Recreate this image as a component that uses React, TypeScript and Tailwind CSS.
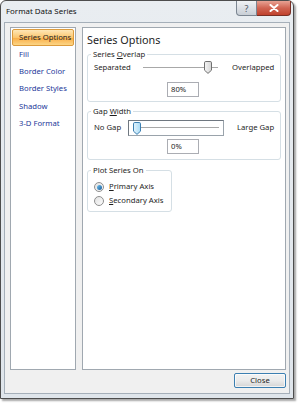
import React from "react";

const listItems = ["Fill", "Border Color", "Border Styles", "Shadow", "3-D Format"];

function Thumb({ active }: { active?: boolean }) {
  return (
    <svg width="8" height="13" viewBox="0 0 8 13" className="block">
      <defs>
        <linearGradient id={active ? "thA" : "thN"} x1="0" y1="0" x2="1" y2="0">
          <stop offset="0" stopColor={active ? "#e4f4fc" : "#f6f6f6"} />
          <stop offset="1" stopColor={active ? "#a9dbf6" : "#d4d4d4"} />
        </linearGradient>
      </defs>
      <path
        d="M1.8 0.5 H6.2 Q7.5 0.5 7.5 1.8 V9.2 L4 12.4 L0.5 9.2 V1.8 Q0.5 0.5 1.8 0.5 Z"
        fill={`url(#${active ? "thA" : "thN"})`}
        stroke={active ? "#3c7fb1" : "#707070"}
        strokeWidth="1"
      />
    </svg>
  );
}

function Group({
  label,
  className,
  children,
}: {
  label: React.ReactNode;
  className?: string;
  children: React.ReactNode;
}) {
  return (
    <fieldset className={`rounded-[3px] border border-[#d5dfe5] ${className ?? ""}`}>
      <legend className="ml-[3px] px-[2px] text-[7.7px] leading-[11px] text-[#1e1e1e]">
        {label}
      </legend>
      {children}
    </fieldset>
  );
}

function Field({ value }: { value: string }) {
  return (
    <div className="ml-[79px] flex h-[15px] w-[32px] items-center border border-[#abadb3] bg-white pl-[3px] text-[7.7px] text-[#1e1e1e]">
      {value}
    </div>
  );
}

function Radio({ checked, label }: { checked?: boolean; label: React.ReactNode }) {
  return (
    <div className="flex h-[14px] items-center pl-[6px]">
      <div className="flex h-[10px] w-[10px] items-center justify-center rounded-full border border-[#8f8f8f] bg-gradient-to-br from-[#e2e2e2] to-[#fbfbfb]">
        {checked ? (
          <div className="h-[5px] w-[5px] rounded-full bg-gradient-to-br from-[#6fc0ec] to-[#1a5e9b]" />
        ) : null}
      </div>
      <span className="ml-[5px] text-[7.7px] text-[#1e1e1e]">{label}</span>
    </div>
  );
}

export default function App() {
  return (
    <div className="h-[403px] w-[300px] bg-white font-['Noto_Sans',sans-serif]">
      <div className="flex h-[399px] w-[294px] flex-col rounded-t-[6px] border border-[#4d4d4d] bg-gradient-to-b from-[#e9edf1] to-[#dfe5eb] shadow-[2px_2px_2px_rgba(0,0,0,0.35)]">
        {/* title bar */}
        <div className="flex h-[21px] items-start">
          <span className="mt-[4px] ml-[5px] text-[7.9px] leading-[12px] text-[#111]">
            Format Data Series
          </span>
          <div className="ml-auto mr-[2px] flex">
            <div className="flex h-[15px] w-[21px] items-center justify-center rounded-bl-[4px] border border-t-0 border-[#7b8591] bg-gradient-to-b from-[#f0f2f4] to-[#c8ced6] text-[9px] leading-none text-[#4b5563]">
              ?
            </div>
            <div className="flex h-[15px] w-[34px] items-center justify-center rounded-br-[4px] border border-t-0 border-l-0 border-[#7a2f24] bg-gradient-to-b from-[#e8a294] via-[#d06452] to-[#c0412d]">
              <svg width="10" height="8" viewBox="0 0 10 8">
                <path d="M1.5 1 L8.5 7 M8.5 1 L1.5 7" stroke="#ffffff" strokeWidth="2" strokeLinecap="round" />
              </svg>
            </div>
          </div>
        </div>

        {/* client area */}
        <div className="mx-[3px] mb-[4px] flex flex-1 flex-col border border-[#a5afb9] bg-[#f0f0f0] pt-[4px] pr-[3px] pb-[5px] pl-[5px]">
          <div className="flex flex-1 gap-[6px]">
            {/* category list */}
            <div className="w-[66px] border border-[#a0a8b0] bg-white p-[1px]">
              <div className="flex h-[17px] items-center rounded-[2px] border border-[#dc9b3c] bg-[linear-gradient(#fee7b6,#fcc66f_50%,#f9ac45_52%,#fcd585)] pl-[6px] text-[7.7px] text-[#1e1e1e]">
                Series Options
              </div>
              {listItems.map((item) => (
                <div
                  key={item}
                  className="flex h-[17.3px] items-center pl-[7px] text-[7.7px] text-[#24399a]"
                >
                  {item}
                </div>
              ))}
            </div>

            {/* options panel */}
            <div className="flex-1 border border-[#a0a8b0] bg-white px-[4px] pt-[5px]">
              <div className="text-[10.8px] leading-[14px] text-[#1e1e1e]">Series Options</div>

              <Group
                className="mt-[2px] pb-[4px]"
                label={
                  <>
                    Series <span className="underline">O</span>verlap
                  </>
                }
              >
                <div className="mt-[1px] flex h-[14px] items-center pl-[6px] text-[7.7px] text-[#1e1e1e]">
                  <span className="w-[49px]">Separated</span>
                  <div className="relative flex h-[14px] w-[75px] items-center">
                    <div className="h-[2px] w-full border-t border-b border-t-[#a8a8a8] border-b-white" />
                    <div className="absolute top-[0px] left-[61px]">
                      <Thumb />
                    </div>
                  </div>
                  <span className="ml-[14px]">Overlapped</span>
                </div>
                <div className="mt-[7px]">
                  <Field value="80%" />
                </div>
              </Group>

              <Group
                className="mt-[4px] pb-[5px]"
                label={
                  <>
                    Gap <span className="underline">W</span>idth
                  </>
                }
              >
                <div className="mt-[3px] flex h-[16px] items-center pl-[6px] text-[7.7px] text-[#1e1e1e]">
                  <span className="w-[34px]">No Gap</span>
                  <div className="relative flex h-[16px] w-[96px] items-center border border-[#9aa3ab] border-t-[#6f7780] border-l-[#6f7780]">
                    <div className="mx-[4px] h-[2px] flex-1 border-t border-b border-t-[#a8a8a8] border-b-white" />
                    <div className="absolute top-[1px] left-[4px]">
                      <Thumb active />
                    </div>
                  </div>
                  <span className="ml-[13px]">Large Gap</span>
                </div>
                <div className="mt-[3px]">
                  <Field value="0%" />
                </div>
              </Group>

              <Group className="mt-[5px] w-[85px] pb-[3px]" label="Plot Series On">
                <div className="mt-[4px]">
                  <Radio
                    checked
                    label={
                      <>
                        <span className="underline">P</span>rimary Axis
                      </>
                    }
                  />
                  <Radio
                    label={
                      <>
                        <span className="underline">S</span>econdary Axis
                      </>
                    }
                  />
                </div>
              </Group>
            </div>
          </div>

          <div className="mt-[3px] flex justify-end">
            <button className="h-[15px] w-[52px] rounded-[2px] border border-[#3c7fb1] bg-gradient-to-b from-[#f2f2f2] via-[#ebebeb] to-[#d5d5d5] text-[7.7px] leading-none text-[#1e1e1e] shadow-[inset_0_0_0_1px_rgba(255,255,255,0.7)]">
              Close
            </button>
          </div>
        </div>
      </div>
    </div>
  );
}
